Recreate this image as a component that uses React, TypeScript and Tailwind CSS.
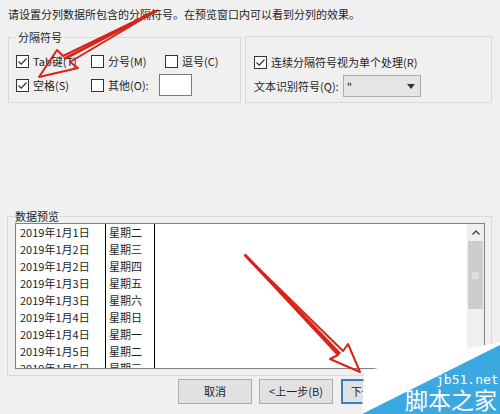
import React from "react";

const rows = [
  ["2019年1月1日", "星期二"],
  ["2019年1月2日", "星期三"],
  ["2019年1月2日", "星期四"],
  ["2019年1月3日", "星期五"],
  ["2019年1月3日", "星期六"],
  ["2019年1月4日", "星期日"],
  ["2019年1月4日", "星期一"],
  ["2019年1月5日", "星期二"],
  ["2019年1月5日", "星期三"],
];

function Box({ checked }: { checked?: boolean }) {
  return (
    <span className="w-[13px] h-[13px] border border-[#333] bg-white flex items-center justify-center shrink-0">
      {checked && (
        <svg width="11" height="11" viewBox="0 0 11 11">
          <path d="M1.5 5.5 L4.2 8.2 L9.5 2.5" fill="none" stroke="#333" strokeWidth="1.2" />
        </svg>
      )}
    </span>
  );
}

function Check({ label, checked }: { label: string; checked?: boolean }) {
  return (
    <div className="flex items-center gap-[4px] h-[18px] whitespace-nowrap">
      <Box checked={checked} />
      <span>{label}</span>
    </div>
  );
}

function Button({ label, primary }: { label: string; primary?: boolean }) {
  return (
    <button
      className={`w-[74px] h-[25px] bg-[#e1e1e1] flex items-center justify-center whitespace-nowrap ${
        primary ? "border-2 border-[#3d7db5]" : "border border-[#adadad]"
      }`}
    >
      {label}
    </button>
  );
}

export default function App() {
  return (
    <div className="relative w-[500px] h-[414px] overflow-hidden bg-[#f0f0f0] text-[11px] text-[#1e1e1e] font-['Noto_Sans_CJK_SC',sans-serif] pt-[7px]">
      {/* instruction */}
      <p className="ml-[8px] h-[14px] leading-[14px] whitespace-nowrap">
        请设置分列数据所包含的分隔符号。在预览窗口内可以看到分列的效果。
      </p>

      {/* separator groups */}
      <div className="mt-[9px] ml-[8px] flex items-end gap-[4px] h-[73px]">
        <fieldset className="w-[233px] h-[73px] border border-[#d9d9d9] pl-[7px]">
          <legend className="px-[2px] leading-[14px]">分隔符号</legend>
          <div className="pt-[8px] flex flex-col gap-[4px]">
            <div className="grid grid-cols-[75px_74px_1fr] h-[18px] items-center">
              <Check label="Tab键(T)" checked />
              <Check label="分号(M)" />
              <Check label="逗号(C)" />
            </div>
            <div className="grid grid-cols-[75px_74px_1fr] h-[22px] items-center">
              <Check label="空格(S)" checked />
              <div className="flex items-center gap-[10px]">
                <Check label="其他(O):" />
                <span className="w-[33px] h-[22px] bg-white border border-[#7a7a7a] shrink-0" />
              </div>
            </div>
          </div>
        </fieldset>

        <fieldset className="w-[247px] h-[67px] border border-[#d9d9d9] pl-[8px] pt-[16px]">
          <div className="flex flex-col gap-[4px]">
            <Check label="连续分隔符号视为单个处理(R)" checked />
            <div className="flex items-center h-[22px] gap-[4px] whitespace-nowrap">
              <span>文本识别符号(Q):</span>
              <div className="w-[78px] h-[22px] bg-[#e5e5e5] border border-[#acacac] flex items-center justify-between pl-[3px] pr-[5px]">
                <span>"</span>
                <svg width="8" height="5" viewBox="0 0 8 5">
                  <path d="M0 0 L8 0 L4 5 Z" fill="#333" />
                </svg>
              </div>
            </div>
          </div>
        </fieldset>
      </div>

      {/* data preview */}
      <fieldset className="mt-[106px] ml-[7px] w-[485px] h-[167px] border border-[#d9d9d9] pl-[7px]">
        <legend className="leading-[14px]">数据预览</legend>
        <div className="w-[470px] h-[146px] border border-[#828282] bg-white flex overflow-hidden">
          <div className="w-[90px] border-r border-black pl-[4px]">
            {rows.map((r, i) => (
              <div key={i} className="h-[17px] leading-[17px] whitespace-nowrap">
                {r[0]}
              </div>
            ))}
          </div>
          <div className="w-[49px] border-r border-black pl-[3px]">
            {rows.map((r, i) => (
              <div key={i} className="h-[17px] leading-[17px] whitespace-nowrap">
                {r[1]}
              </div>
            ))}
          </div>
          <div className="flex-1" />
          <div className="w-[17px] bg-[#f0f0f0] flex flex-col items-center">
            <svg className="mt-[6px]" width="8" height="5" viewBox="0 0 8 5">
              <path d="M0.5 4.5 L4 1 L7.5 4.5" fill="none" stroke="#444" strokeWidth="1.4" />
            </svg>
            <div className="mt-[6px] w-[15px] h-[68px] bg-[#cdcdcd] flex items-center justify-center">
              <span className="w-[7px] h-[7px] bg-[#dedede]" />
            </div>
          </div>
        </div>
      </fieldset>

      {/* buttons */}
      <div className="mt-[3px] ml-[178px] flex gap-[7px]">
        <Button label="取消" />
        <Button label="<上一步(B)" />
        <div className="ml-[1px]">
          <Button label="下一步(N)>" primary />
        </div>
      </div>

      {/* annotation arrows */}
      <svg className="absolute left-0 top-0 pointer-events-none" width="500" height="414">
        <polygon
          points="39,77 57,50 63,56 156,11 70,62 78,68"
          fill="none"
          stroke="#d8231b"
          strokeWidth="2"
          strokeLinejoin="round"
        />
        <line x1="156" y1="11" x2="64" y2="59" stroke="#d8231b" strokeWidth="3" />
        <polygon
          points="360,372 330,359 338,355 245,255 343,351 348,344"
          fill="none"
          stroke="#d8231b"
          strokeWidth="2"
          strokeLinejoin="round"
        />
        <line x1="245" y1="255" x2="340" y2="354" stroke="#d8231b" strokeWidth="3" />
        {/* watermark */}
        <polygon points="364,371 500,342 500,414 362,414" fill="#ffffff" />
        <polygon points="362,414 500,345 500,414" fill="#3ba9df" />
      </svg>
      <span className="absolute left-[436px] top-[373px] text-[13px] leading-[13px] text-white font-['DejaVu_Sans_Mono',monospace]">
        jb51.net
      </span>
      <span className="absolute left-[405px] top-[388px] text-[23px] leading-[23px] text-white">
        脚本之家
      </span>
    </div>
  );
}
